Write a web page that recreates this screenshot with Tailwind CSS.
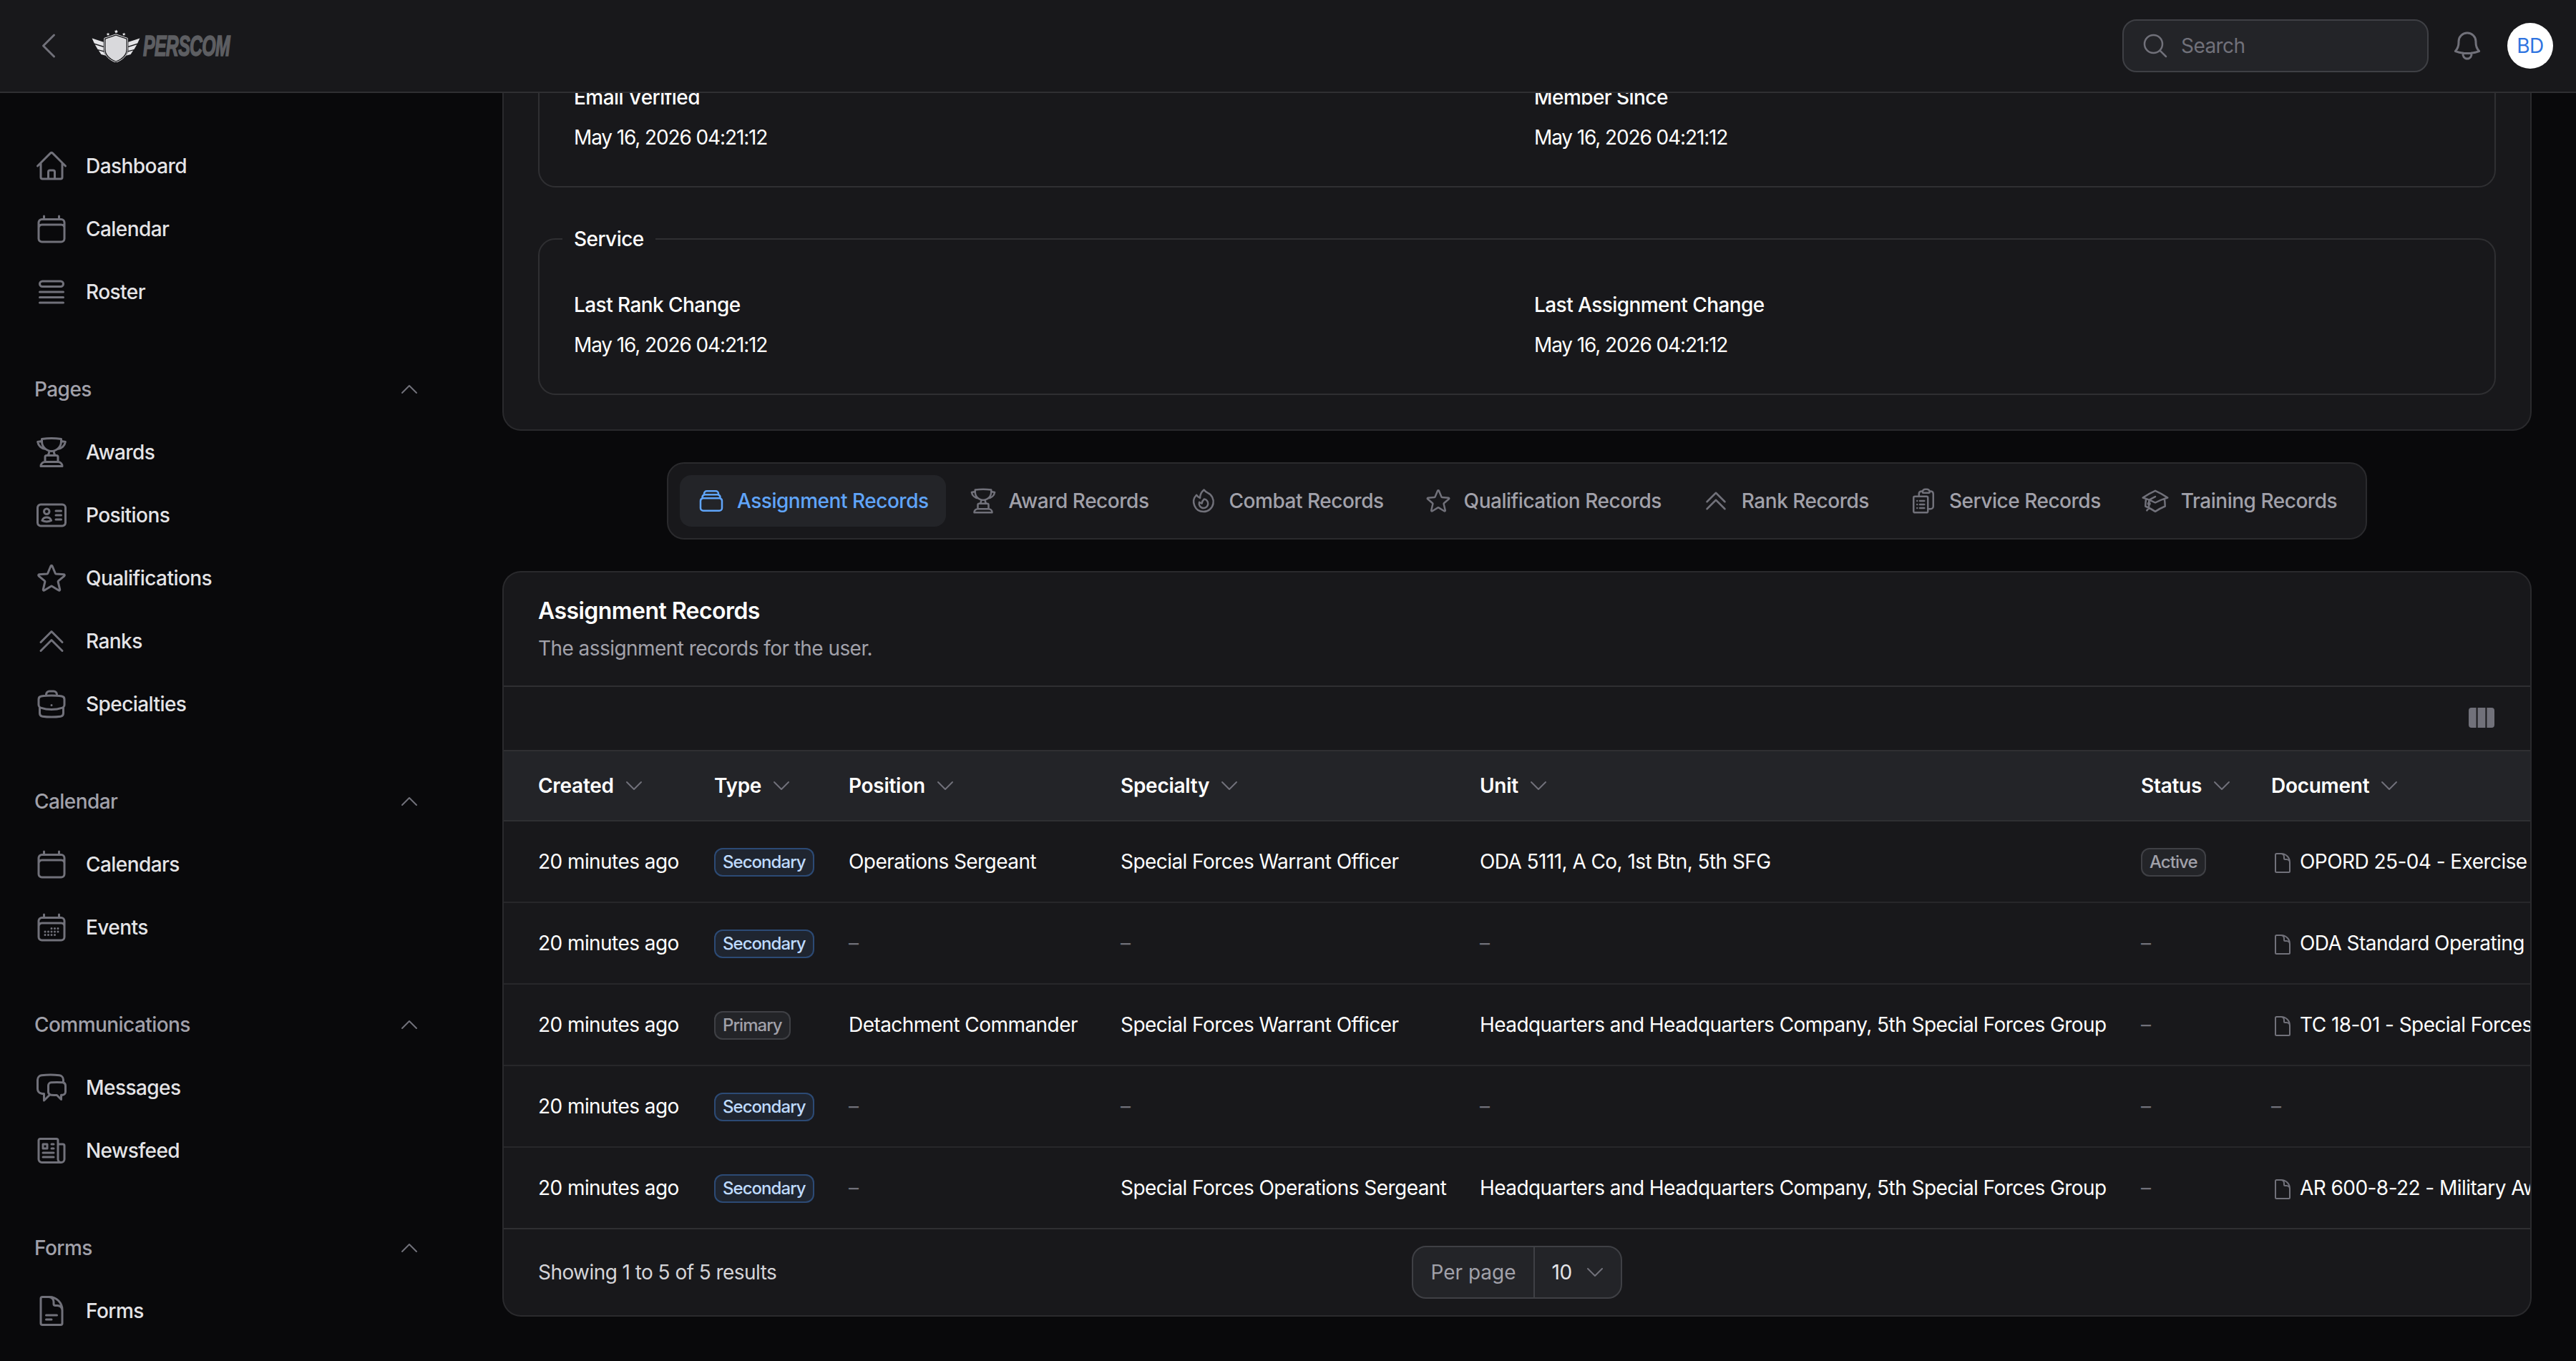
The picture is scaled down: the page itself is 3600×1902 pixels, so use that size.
<!DOCTYPE html>
<html lang="en">
<head>
  <meta charset="UTF-8" />
  <meta name="viewport" content="width=device-width, initial-scale=1" />
  <title>Perscom - Assignment Records</title>
  <script src="https://cdn.jsdelivr.net/npm/@tailwindcss/browser@4"></script>
</head>
<body class="bg-[#09090b] overflow-hidden">

<!-- icon sprite -->
<svg class="hidden" xmlns="http://www.w3.org/2000/svg">
  <symbol id="i-calendar" viewBox="0 0 24 24"><path d="M6.75 3v2.25M17.25 3v2.25M3 18.75V7.5a2.25 2.25 0 0 1 2.25-2.25h13.5A2.25 2.25 0 0 1 21 7.5v11.25m-18 0A2.25 2.25 0 0 0 5.25 21h13.5A2.25 2.25 0 0 0 21 18.75m-18 0v-7.5A2.25 2.25 0 0 1 5.25 9h13.5A2.25 2.25 0 0 1 21 11.25v7.5"/></symbol>
  <symbol id="i-trophy" viewBox="0 0 24 24"><path d="M16.5 18.75h-9m9 0a3 3 0 0 1 3 3h-15a3 3 0 0 1 3-3m9 0v-3.375c0-.621-.503-1.125-1.125-1.125h-.871M7.5 18.75v-3.375c0-.621.504-1.125 1.125-1.125h.872m5.007 0H9.497m5.007 0a7.454 7.454 0 0 1-.982-3.172M9.497 14.25a7.454 7.454 0 0 0 .981-3.172M5.25 4.236c-.982.143-1.954.317-2.916.52A6.003 6.003 0 0 0 7.73 9.728M5.25 4.236V4.5c0 2.108.966 3.99 2.48 5.228M5.25 4.236V2.721C7.456 2.41 9.71 2.25 12 2.25c2.291 0 4.545.16 6.75.47v1.516M7.73 9.728a6.726 6.726 0 0 0 2.748 1.35m8.272-6.842V4.5c0 2.108-.966 3.99-2.48 5.228m2.48-5.492a46.32 46.32 0 0 1 2.916.52 6.003 6.003 0 0 1-5.395 4.972m0 0a6.726 6.726 0 0 1-2.749 1.35m0 0a6.772 6.772 0 0 1-3.044 0"/></symbol>
  <symbol id="i-star" viewBox="0 0 24 24"><path d="M11.48 3.499a.562.562 0 0 1 1.04 0l2.125 5.111a.563.563 0 0 0 .475.345l5.518.442c.499.04.701.663.321.988l-4.204 3.602a.563.563 0 0 0-.182.557l1.285 5.385a.562.562 0 0 1-.84.61l-4.725-2.885a.562.562 0 0 0-.586 0L6.982 20.54a.562.562 0 0 1-.84-.61l1.285-5.386a.562.562 0 0 0-.182-.557l-4.204-3.602a.562.562 0 0 1 .321-.988l5.518-.442a.563.563 0 0 0 .475-.345L11.48 3.5Z"/></symbol>
  <symbol id="i-ranks" viewBox="0 0 24 24"><path d="m4.5 18.75 7.5-7.5 7.5 7.5"/><path d="m4.5 12.75 7.5-7.5 7.5 7.5"/></symbol>
  <symbol id="i-up" viewBox="0 0 24 24"><path d="m4.5 15.75 7.5-7.5 7.5 7.5"/></symbol>
  <symbol id="i-down" viewBox="0 0 24 24"><path d="m19.5 8.25-7.5 7.5-7.5-7.5"/></symbol>
  <symbol id="i-doc" viewBox="0 0 24 24"><path d="M19.5 14.25v-2.625a3.375 3.375 0 0 0-3.375-3.375h-1.5A1.125 1.125 0 0 1 13.5 7.125v-1.5a3.375 3.375 0 0 0-3.375-3.375H8.25m2.25 0H5.625c-.621 0-1.125.504-1.125 1.125v17.25c0 .621.504 1.125 1.125 1.125h12.75c.621 0 1.125-.504 1.125-1.125V11.25a9 9 0 0 0-9-9Z"/></symbol>
</svg>

<div class="[zoom:2] w-[1800px] h-[951px] flex flex-col overflow-hidden bg-[#09090b] text-white text-sm tracking-[-0.02em] [font-family:Inter,sans-serif]">

  <!-- TOP BAR -->
  <header class="h-[65px] shrink-0 flex items-center justify-between pl-[22px] pr-4 bg-[#18181b] border-b border-[#2f2f32]">
    <div class="flex items-center gap-[18px]">
      <svg class="w-6 h-6 text-[#71717a]" fill="none" stroke="currentColor" stroke-width="1.5" stroke-linecap="round" stroke-linejoin="round" viewBox="0 0 24 24"><path d="M15.75 19.5 8.25 12l7.5-7.5"/></svg>
      <div class="flex items-center gap-[2px] w-[98px]">
        <svg class="w-[34px] h-[23px] shrink-0" viewBox="0 0 34 23" fill="#e4e4e7">
          <path d="M11.5 2.2l.35.75.8.1-.6.55.15.8-.7-.4-.7.4.15-.8-.6-.55.8-.1z"/>
          <path d="M17.2.2l.4.85.9.1-.65.62.17.9-.82-.45-.82.45.17-.9-.65-.62.9-.1z"/>
          <path d="M22.6 2.2l.35.75.8.1-.6.55.15.8-.7-.4-.7.4.15-.8-.6-.55.8-.1z"/>
          <path d="M17 4.6l7 2.4v7c0 4-3.4 6.6-7 8-3.6-1.4-7-4-7-8V7z" fill="#d9d9dc" stroke="#f4f4f5" stroke-width=".4"/>
          <path d="M17 3.4l8.1 2.8v7.9c0 4.6-4 7.5-8.1 9-4.100-1.500-8.100-4.400-8.100-9V6.200z" fill="none" stroke="#e4e4e7" stroke-width=".5"/>
          <path d="M.3 6.200l8 2.700v2.900L1.900 9.700zM2.300 10.600l6 1.900v2.500l-4-1zM4.900 14.800l3.600.9c.3 1 .8 1.900 1.500 2.700l-3.300-.9z"/>
          <path d="M33.700 6.200l-8 2.700v2.900l6.400-2.100zM31.700 10.600l-6 1.900v2.500l4-1zM29.100 14.800l-3.600.9c-.3 1-.8 1.900-1.500 2.700l3.300-.9z"/>
        </svg>
        <span class="text-[#5d5e62] italic font-bold text-[20px] leading-none whitespace-nowrap origin-left scale-x-[0.62] [font-family:'Liberation_Sans',sans-serif] tracking-tight [-webkit-text-stroke:0.8px_#5d5e62]">PERSCOM</span>
      </div>
    </div>
    <div class="flex items-center">
      <div class="w-[214px] h-[37px] flex items-center gap-2 px-3 rounded-[10px] bg-[#232428] border border-[#3f4045]">
        <svg class="w-5 h-5 text-[#71717a]" fill="none" stroke="currentColor" stroke-width="1.5" stroke-linecap="round" stroke-linejoin="round" viewBox="0 0 24 24"><path d="m21 21-5.197-5.197m0 0A7.5 7.5 0 1 0 5.196 5.196a7.5 7.5 0 0 0 10.607 10.607Z"/></svg>
        <span class="text-[#71717a]">Search</span>
      </div>
      <svg class="w-6 h-6 ml-[15px] text-[#71717a]" fill="none" stroke="currentColor" stroke-width="1.5" stroke-linecap="round" stroke-linejoin="round" viewBox="0 0 24 24"><path d="M14.857 17.082a23.848 23.848 0 0 0 5.454-1.31A8.967 8.967 0 0 1 18 9.75V9A6 6 0 0 0 6 9v.75a8.967 8.967 0 0 1-2.312 6.022c1.733.64 3.56 1.085 5.455 1.31m5.714 0a24.255 24.255 0 0 1-5.714 0m5.714 0a3 3 0 1 1-5.714 0"/></svg>
      <div class="w-8 h-8 ml-4 rounded-full bg-white flex items-center justify-center text-sm text-[#2f74e0]">BD</div>
    </div>
  </header>

  <div class="flex flex-1 min-h-0">

    <!-- SIDEBAR -->
    <aside class="w-80 shrink-0 px-6 pt-[33px] flex flex-col gap-8 font-medium text-[#e4e4e7] overflow-hidden">
      <div class="flex flex-col gap-2">
        <a class="h-9 flex items-center gap-3"><svg class="w-6 h-6 text-[#71717a]" fill="none" stroke="currentColor" stroke-width="1.5" stroke-linecap="round" stroke-linejoin="round" viewBox="0 0 24 24"><path d="m2.25 12 8.954-8.955c.44-.439 1.152-.439 1.591 0L21.75 12M4.5 9.75v10.125c0 .621.504 1.125 1.125 1.125H9.75v-4.875c0-.621.504-1.125 1.125-1.125h2.25c.621 0 1.125.504 1.125 1.125V21h4.125c.621 0 1.125-.504 1.125-1.125V9.75M8.25 21h8.25"/></svg>Dashboard</a>
        <a class="h-9 flex items-center gap-3"><svg class="w-6 h-6 text-[#71717a]" fill="none" stroke="currentColor" stroke-width="1.5" stroke-linecap="round" stroke-linejoin="round"><use href="#i-calendar"/></svg>Calendar</a>
        <a class="h-9 flex items-center gap-3"><svg class="w-6 h-6 text-[#71717a]" fill="none" stroke="currentColor" stroke-width="1.5" stroke-linecap="round" stroke-linejoin="round" viewBox="0 0 24 24"><path d="M3.75 12h16.5m-16.5 3.75h16.5m-16.5 3.75h16.5M5.625 4.5h12.75a1.875 1.875 0 0 1 0 3.75H5.625a1.875 1.875 0 0 1 0-3.75Z"/></svg>Roster</a>
      </div>

      <div class="flex flex-col gap-2">
        <div class="h-9 flex items-center justify-between text-[#a1a1aa]">Pages<svg class="w-4 h-4 mr-0.5 text-[#71717a]" fill="none" stroke="currentColor" stroke-width="1.5" stroke-linecap="round" stroke-linejoin="round"><use href="#i-up"/></svg></div>
        <a class="h-9 flex items-center gap-3"><svg class="w-6 h-6 text-[#71717a]" fill="none" stroke="currentColor" stroke-width="1.5" stroke-linecap="round" stroke-linejoin="round"><use href="#i-trophy"/></svg>Awards</a>
        <a class="h-9 flex items-center gap-3"><svg class="w-6 h-6 text-[#71717a]" fill="none" stroke="currentColor" stroke-width="1.5" stroke-linecap="round" stroke-linejoin="round" viewBox="0 0 24 24"><path d="M15 9h3.75M15 12h3.75M15 15h3.75M4.5 19.5h15a2.25 2.25 0 0 0 2.25-2.25V6.75A2.25 2.25 0 0 0 19.5 4.5h-15a2.25 2.25 0 0 0-2.25 2.25v10.5A2.25 2.25 0 0 0 4.5 19.5Zm6-10.125a1.875 1.875 0 1 1-3.75 0 1.875 1.875 0 0 1 3.75 0Zm1.294 6.336a6.721 6.721 0 0 1-3.17.789 6.721 6.721 0 0 1-3.168-.789 3.376 3.376 0 0 1 6.338 0Z"/></svg>Positions</a>
        <a class="h-9 flex items-center gap-3"><svg class="w-6 h-6 text-[#71717a]" fill="none" stroke="currentColor" stroke-width="1.5" stroke-linecap="round" stroke-linejoin="round"><use href="#i-star"/></svg>Qualifications</a>
        <a class="h-9 flex items-center gap-3"><svg class="w-6 h-6 text-[#71717a]" fill="none" stroke="currentColor" stroke-width="1.5" stroke-linecap="round" stroke-linejoin="round"><use href="#i-ranks"/></svg>Ranks</a>
        <a class="h-9 flex items-center gap-3"><svg class="w-6 h-6 text-[#71717a]" fill="none" stroke="currentColor" stroke-width="1.5" stroke-linecap="round" stroke-linejoin="round" viewBox="0 0 24 24"><path d="M20.25 14.15v4.25c0 1.094-.787 2.036-1.872 2.18-2.087.277-4.216.42-6.378.42s-4.291-.143-6.378-.42c-1.085-.144-1.872-1.086-1.872-2.18v-4.25m16.5 0a2.18 2.18 0 0 0 .75-1.661V8.706c0-1.081-.768-2.015-1.837-2.175a48.114 48.114 0 0 0-3.413-.387m4.5 8.006c-.194.165-.42.295-.673.38A23.978 23.978 0 0 1 12 15.75c-2.648 0-5.195-.429-7.577-1.22a2.016 2.016 0 0 1-.673-.38m0 0A2.18 2.18 0 0 1 3 12.489V8.706c0-1.081.768-2.015 1.837-2.175a48.111 48.111 0 0 1 3.413-.387m7.5 0V5.25A2.25 2.25 0 0 0 13.5 3h-3a2.25 2.25 0 0 0-2.25 2.25v.894m7.5 0a48.667 48.667 0 0 0-7.5 0M12 12.75h.008v.008H12v-.008Z"/></svg>Specialties</a>
      </div>

      <div class="flex flex-col gap-2">
        <div class="h-9 flex items-center justify-between text-[#a1a1aa]">Calendar<svg class="w-4 h-4 mr-0.5 text-[#71717a]" fill="none" stroke="currentColor" stroke-width="1.5" stroke-linecap="round" stroke-linejoin="round"><use href="#i-up"/></svg></div>
        <a class="h-9 flex items-center gap-3"><svg class="w-6 h-6 text-[#71717a]" fill="none" stroke="currentColor" stroke-width="1.5" stroke-linecap="round" stroke-linejoin="round"><use href="#i-calendar"/></svg>Calendars</a>
        <a class="h-9 flex items-center gap-3"><svg class="w-6 h-6 text-[#71717a]" fill="none" stroke="currentColor" stroke-width="1.5" stroke-linecap="round" stroke-linejoin="round" viewBox="0 0 24 24"><path d="M6.75 3v2.25M17.25 3v2.25M3 18.75V7.5a2.25 2.25 0 0 1 2.25-2.25h13.5A2.25 2.25 0 0 1 21 7.5v11.25m-18 0A2.25 2.25 0 0 0 5.25 21h13.5A2.25 2.25 0 0 0 21 18.75m-18 0v-7.5A2.25 2.25 0 0 1 5.25 9h13.5A2.25 2.25 0 0 1 21 11.25v7.5m-9-6h.008v.008H12v-.008ZM12 15h.008v.008H12V15Zm0 2.25h.008v.008H12v-.008ZM9.75 15h.008v.008H9.75V15Zm0 2.25h.008v.008H9.75v-.008ZM7.5 15h.008v.008H7.5V15Zm0 2.25h.008v.008H7.5v-.008Zm6.75-4.5h.008v.008h-.008v-.008Zm0 2.25h.008v.008h-.008V15Zm0 2.25h.008v.008h-.008v-.008Zm2.25-4.5h.008v.008H16.5v-.008Zm0 2.25h.008v.008H16.5V15Z"/></svg>Events</a>
      </div>

      <div class="flex flex-col gap-2">
        <div class="h-9 flex items-center justify-between text-[#a1a1aa]">Communications<svg class="w-4 h-4 mr-0.5 text-[#71717a]" fill="none" stroke="currentColor" stroke-width="1.5" stroke-linecap="round" stroke-linejoin="round"><use href="#i-up"/></svg></div>
        <a class="h-9 flex items-center gap-3"><svg class="w-6 h-6 text-[#71717a]" fill="none" stroke="currentColor" stroke-width="1.5" stroke-linecap="round" stroke-linejoin="round" viewBox="0 0 24 24"><path d="M20.25 8.511c.884.284 1.5 1.128 1.5 2.097v4.286c0 1.136-.847 2.1-1.98 2.193-.34.027-.68.052-1.02.072v3.091l-3-3c-1.354 0-2.694-.055-4.02-.163a2.115 2.115 0 0 1-.825-.242m9.345-8.334a2.126 2.126 0 0 0-.476-.095 48.64 48.64 0 0 0-8.048 0c-1.131.094-1.976 1.057-1.976 2.192v4.286c0 .837.46 1.58 1.155 1.951m9.345-8.334V6.637c0-1.621-1.152-3.026-2.76-3.235A48.455 48.455 0 0 0 11.25 3c-2.115 0-4.198.137-6.24.402-1.608.209-2.76 1.614-2.76 3.235v6.226c0 1.621 1.152 3.026 2.76 3.235.577.075 1.157.14 1.74.194V21l4.155-4.155"/></svg>Messages</a>
        <a class="h-9 flex items-center gap-3"><svg class="w-6 h-6 text-[#71717a]" fill="none" stroke="currentColor" stroke-width="1.5" stroke-linecap="round" stroke-linejoin="round" viewBox="0 0 24 24"><path d="M12 7.5h1.5m-1.5 3h1.5m-7.5 3h7.5m-7.5 3h7.5m3-9h3.375c.621 0 1.125.504 1.125 1.125V18a2.25 2.25 0 0 1-2.25 2.25M16.5 7.5V18a2.25 2.25 0 0 0 2.25 2.25M16.5 7.5V4.875c0-.621-.504-1.125-1.125-1.125H4.125C3.504 3.75 3 4.254 3 4.875V18a2.25 2.25 0 0 0 2.25 2.25h13.5M6 7.5h3v3H6v-3Z"/></svg>Newsfeed</a>
      </div>

      <div class="flex flex-col gap-2">
        <div class="h-9 flex items-center justify-between text-[#a1a1aa]">Forms<svg class="w-4 h-4 mr-0.5 text-[#71717a]" fill="none" stroke="currentColor" stroke-width="1.5" stroke-linecap="round" stroke-linejoin="round"><use href="#i-up"/></svg></div>
        <a class="h-9 flex items-center gap-3"><svg class="w-6 h-6 text-[#71717a]" fill="none" stroke="currentColor" stroke-width="1.5" stroke-linecap="round" stroke-linejoin="round" viewBox="0 0 24 24"><path d="M19.5 14.25v-2.625a3.375 3.375 0 0 0-3.375-3.375h-1.5A1.125 1.125 0 0 1 13.5 7.125v-1.5a3.375 3.375 0 0 0-3.375-3.375H8.25m0 12.75h7.5m-7.5 3H12M10.5 2.25H5.625c-.621 0-1.125.504-1.125 1.125v17.25c0 .621.504 1.125 1.125 1.125h12.75c.621 0 1.125-.504 1.125-1.125V11.25a9 9 0 0 0-9-9Z"/></svg>Forms</a>
      </div>
    </aside>

    <!-- MAIN (scrolled, first card runs under the top bar) -->
    <main class="flex-1 min-w-0 px-8 overflow-hidden">
      <section class="-mt-[77px] bg-[#18181b] rounded-xl ring-1 ring-[#2a2a2d] p-6">
        <fieldset class="border border-[#2f2f32] rounded-xl px-6 pb-6 pt-[26px]">
          <legend class="h-5 -ml-2 px-2"></legend>
          <div class="grid grid-cols-2 gap-6">
            <div class="flex flex-col gap-2"><div class="font-medium">Email Verified</div><div class="tracking-[-0.04em]">May 16, 2026 04:21:12</div></div>
            <div class="flex flex-col gap-2"><div class="font-medium">Member Since</div><div class="tracking-[-0.04em]">May 16, 2026 04:21:12</div></div>
          </div>
        </fieldset>
        <fieldset class="mt-[26px] border border-[#2f2f32] rounded-xl px-6 pb-6 pt-[26px]">
          <legend class="-ml-2 px-2 font-medium">Service</legend>
          <div class="grid grid-cols-2 gap-6">
            <div class="flex flex-col gap-2"><div class="font-medium">Last Rank Change</div><div class="tracking-[-0.04em]">May 16, 2026 04:21:12</div></div>
            <div class="flex flex-col gap-2"><div class="font-medium">Last Assignment Change</div><div class="tracking-[-0.04em]">May 16, 2026 04:21:12</div></div>
          </div>
        </fieldset>
      </section>

      <!-- TABS -->
      <nav class="mt-[23px] mx-auto w-fit flex gap-1 p-2 bg-[#18181b] border border-[#2a2a2d] rounded-xl font-medium text-[#a1a1aa] whitespace-nowrap tracking-[-0.017em]">
        <a class="h-9 flex items-center gap-2 px-3 rounded-lg bg-[#232428] text-[#60a5fa]"><svg class="w-5 h-5" fill="none" stroke="currentColor" stroke-width="1.5" stroke-linecap="round" stroke-linejoin="round" viewBox="0 0 24 24"><path d="M6 6.878V6a2.25 2.25 0 0 1 2.25-2.25h7.5A2.25 2.25 0 0 1 18 6v.878m-12 0c.235-.083.487-.128.75-.128h10.5c.263 0 .515.045.75.128m-12 0A2.25 2.25 0 0 0 4.5 9v.878m13.5-3A2.25 2.25 0 0 1 19.5 9v.878m0 0a2.246 2.246 0 0 0-.75-.128H5.25c-.263 0-.515.045-.75.128m15 0A2.25 2.25 0 0 1 21 12v6a2.25 2.25 0 0 1-2.25 2.25H5.25A2.25 2.25 0 0 1 3 18v-6c0-.98.626-1.813 1.5-2.122"/></svg>Assignment Records</a>
        <a class="h-9 flex items-center gap-2 px-3"><svg class="w-5 h-5 text-[#71717a]" fill="none" stroke="currentColor" stroke-width="1.5" stroke-linecap="round" stroke-linejoin="round"><use href="#i-trophy"/></svg>Award Records</a>
        <a class="h-9 flex items-center gap-2 px-3"><svg class="w-5 h-5 text-[#71717a]" fill="none" stroke="currentColor" stroke-width="1.5" stroke-linecap="round" stroke-linejoin="round" viewBox="0 0 24 24"><path d="M15.362 5.214A8.252 8.252 0 0 1 12 21 8.25 8.25 0 0 1 6.038 7.047 8.287 8.287 0 0 0 9 9.601a8.983 8.983 0 0 1 3.361-6.867 8.21 8.21 0 0 0 3 2.48Z"/><path d="M12 18a3.75 3.75 0 0 0 .495-7.468 5.99 5.99 0 0 0-1.925 3.547 5.975 5.975 0 0 1-2.133-1.001A3.75 3.75 0 0 0 12 18Z"/></svg>Combat Records</a>
        <a class="h-9 flex items-center gap-2 px-3"><svg class="w-5 h-5 text-[#71717a]" fill="none" stroke="currentColor" stroke-width="1.5" stroke-linecap="round" stroke-linejoin="round"><use href="#i-star"/></svg>Qualification Records</a>
        <a class="h-9 flex items-center gap-2 px-3"><svg class="w-5 h-5 text-[#71717a]" fill="none" stroke="currentColor" stroke-width="1.5" stroke-linecap="round" stroke-linejoin="round"><use href="#i-ranks"/></svg>Rank Records</a>
        <a class="h-9 flex items-center gap-2 px-3"><svg class="w-5 h-5 text-[#71717a]" fill="none" stroke="currentColor" stroke-width="1.5" stroke-linecap="round" stroke-linejoin="round" viewBox="0 0 24 24"><path d="M9 12h3.75M9 15h3.75M9 18h3.75m3 .75H18a2.25 2.25 0 0 0 2.25-2.25V6.108c0-1.135-.845-2.098-1.976-2.192a48.424 48.424 0 0 0-1.123-.08m-5.801 0c-.065.21-.1.433-.1.664 0 .414.336.75.75.75h4.5a.75.75 0 0 0 .75-.75 2.25 2.25 0 0 0-.1-.664m-5.8 0A2.251 2.251 0 0 1 13.5 2.25H15c1.012 0 1.867.668 2.15 1.586m-5.8 0c-.376.023-.75.05-1.124.08C9.095 4.01 8.25 4.973 8.25 6.108V8.25m0 0H4.875c-.621 0-1.125.504-1.125 1.125v11.25c0 .621.504 1.125 1.125 1.125h9.75c.621 0 1.125-.504 1.125-1.125V9.375c0-.621-.504-1.125-1.125-1.125H8.25ZM6.75 12h.008v.008H6.75V12Zm0 3h.008v.008H6.75V15Zm0 3h.008v.008H6.75V18Z"/></svg>Service Records</a>
        <a class="h-9 flex items-center gap-2 px-3"><svg class="w-5 h-5 text-[#71717a]" fill="none" stroke="currentColor" stroke-width="1.5" stroke-linecap="round" stroke-linejoin="round" viewBox="0 0 24 24"><path d="M4.26 10.147a60.438 60.438 0 0 0-.491 6.347A48.62 48.62 0 0 1 12 20.904a48.62 48.62 0 0 1 8.232-4.41 60.46 60.46 0 0 0-.491-6.347m-15.482 0a50.636 50.636 0 0 0-2.658-.813A59.906 59.906 0 0 1 12 3.493a59.903 59.903 0 0 1 10.399 5.84c-.896.248-1.783.52-2.658.814m-15.482 0A50.717 50.717 0 0 1 12 13.489a50.702 50.702 0 0 1 7.74-3.342M6.75 15a.75.75 0 1 0 0-1.5.75.75 0 0 0 0 1.5Zm0 0v-3.675A55.378 55.378 0 0 1 12 8.443m-7.007 11.55A5.981 5.981 0 0 0 6.75 15.75v-1.5"/></svg>Training Records</a>
      </nav>

      <!-- RECORDS TABLE CARD -->
      <section class="mt-[23px] bg-[#18181b] rounded-xl ring-1 ring-[#2a2a2d] overflow-hidden">
        <div class="h-[79px] px-6 pt-[15px]">
          <h2 class="text-base font-semibold">Assignment Records</h2>
          <p class="mt-1 text-[#a1a1aa]">The assignment records for the user.</p>
        </div>
        <div class="h-[45px] border-t border-[#2f2f32] flex items-center justify-end pr-6">
          <svg class="w-[18px] h-[14px] -mt-px mr-px text-[#71717a]" viewBox="0 0 18 14" fill="currentColor"><path d="M5.300 0v14H2a2 2 0 0 1-2-2V2a2 2 0 0 1 2-2zM6.300 0h5.400v14H6.300zM12.700 0H16a2 2 0 0 1 2 2v10a2 2 0 0 1-2 2h-3.300z"/></svg>
        </div>
        <div class="overflow-hidden">
          <table class="table-fixed w-[1523px] border-collapse whitespace-nowrap text-left">
            <thead>
              <tr class="h-[49px] bg-[#232428] border-y border-[#2f2f32] tracking-[-0.01em]">
                <th class="w-[135px] pl-6 font-semibold"><span class="flex items-center gap-1.5">Created<svg class="w-4 h-4 text-[#71717a]" fill="none" stroke="currentColor" stroke-width="1.5" stroke-linecap="round" stroke-linejoin="round"><use href="#i-down"/></svg></span></th>
                <th class="w-[94px] px-3 font-semibold"><span class="flex items-center gap-1.5">Type<svg class="w-4 h-4 text-[#71717a]" fill="none" stroke="currentColor" stroke-width="1.5" stroke-linecap="round" stroke-linejoin="round"><use href="#i-down"/></svg></span></th>
                <th class="w-[190px] px-3 font-semibold"><span class="flex items-center gap-1.5">Position<svg class="w-4 h-4 text-[#71717a]" fill="none" stroke="currentColor" stroke-width="1.5" stroke-linecap="round" stroke-linejoin="round"><use href="#i-down"/></svg></span></th>
                <th class="w-[251px] px-3 font-semibold"><span class="flex items-center gap-1.5">Specialty<svg class="w-4 h-4 text-[#71717a]" fill="none" stroke="currentColor" stroke-width="1.5" stroke-linecap="round" stroke-linejoin="round"><use href="#i-down"/></svg></span></th>
                <th class="w-[462px] px-3 font-semibold"><span class="flex items-center gap-1.5">Unit<svg class="w-4 h-4 text-[#71717a]" fill="none" stroke="currentColor" stroke-width="1.5" stroke-linecap="round" stroke-linejoin="round"><use href="#i-down"/></svg></span></th>
                <th class="w-[91px] px-3 font-semibold"><span class="flex items-center gap-1.5">Status<svg class="w-4 h-4 text-[#71717a]" fill="none" stroke="currentColor" stroke-width="1.5" stroke-linecap="round" stroke-linejoin="round"><use href="#i-down"/></svg></span></th>
                <th class="w-[300px] px-3 font-semibold"><span class="flex items-center gap-1.5">Document<svg class="w-4 h-4 text-[#71717a]" fill="none" stroke="currentColor" stroke-width="1.5" stroke-linecap="round" stroke-linejoin="round"><use href="#i-down"/></svg></span></th>
              </tr>
            </thead>
            <tbody>
              <tr class="h-[57px] border-b border-[#27272a]">
                <td class="pl-6">20 minutes ago</td>
                <td class="px-3"><span class="inline-flex px-1.5 py-0.5 rounded-md text-xs font-medium tracking-[-0.04em] text-[#bfdbfe] bg-[#1f2530] ring-1 ring-inset ring-[#2c4a75] align-middle">Secondary</span></td>
                <td class="px-3">Operations Sergeant</td>
                <td class="px-3">Special Forces Warrant Officer</td>
                <td class="px-3">ODA 5111, A Co, 1st Btn, 5th SFG</td>
                <td class="px-3"><span class="inline-flex px-1.5 py-0.5 rounded-md text-xs font-medium tracking-[-0.04em] text-[#a1a1aa] bg-[#232428] ring-1 ring-inset ring-[#3f4045] align-middle">Active</span></td>
                <td class="px-3"><span class="flex items-center gap-1"><svg class="w-4 h-4 mt-0.5 shrink-0 text-[#71717a]" fill="none" stroke="currentColor" stroke-width="1.5" stroke-linecap="round" stroke-linejoin="round"><use href="#i-doc"/></svg>OPORD 25-04 - Exercise</span></td>
              </tr>
              <tr class="h-[57px] border-b border-[#27272a] text-[#71717a]">
                <td class="pl-6 text-white">20 minutes ago</td>
                <td class="px-3"><span class="inline-flex px-1.5 py-0.5 rounded-md text-xs font-medium tracking-[-0.04em] text-[#bfdbfe] bg-[#1f2530] ring-1 ring-inset ring-[#2c4a75] align-middle">Secondary</span></td>
                <td class="px-3">–</td>
                <td class="px-3">–</td>
                <td class="px-3">–</td>
                <td class="px-3">–</td>
                <td class="px-3 text-white"><span class="flex items-center gap-1"><svg class="w-4 h-4 mt-0.5 shrink-0 text-[#71717a]" fill="none" stroke="currentColor" stroke-width="1.5" stroke-linecap="round" stroke-linejoin="round"><use href="#i-doc"/></svg>ODA Standard Operating</span></td>
              </tr>
              <tr class="h-[57px] border-b border-[#27272a]">
                <td class="pl-6">20 minutes ago</td>
                <td class="px-3"><span class="inline-flex px-1.5 py-0.5 rounded-md text-xs font-medium tracking-[-0.04em] text-[#a1a1aa] bg-[#232428] ring-1 ring-inset ring-[#3f4045] align-middle">Primary</span></td>
                <td class="px-3">Detachment Commander</td>
                <td class="px-3">Special Forces Warrant Officer</td>
                <td class="px-3">Headquarters and Headquarters Company, 5th Special Forces Group</td>
                <td class="px-3 text-[#71717a]">–</td>
                <td class="px-3"><span class="flex items-center gap-1"><svg class="w-4 h-4 mt-0.5 shrink-0 text-[#71717a]" fill="none" stroke="currentColor" stroke-width="1.5" stroke-linecap="round" stroke-linejoin="round"><use href="#i-doc"/></svg>TC 18-01 - Special Forces</span></td>
              </tr>
              <tr class="h-[57px] border-b border-[#27272a] text-[#71717a]">
                <td class="pl-6 text-white">20 minutes ago</td>
                <td class="px-3"><span class="inline-flex px-1.5 py-0.5 rounded-md text-xs font-medium tracking-[-0.04em] text-[#bfdbfe] bg-[#1f2530] ring-1 ring-inset ring-[#2c4a75] align-middle">Secondary</span></td>
                <td class="px-3">–</td>
                <td class="px-3">–</td>
                <td class="px-3">–</td>
                <td class="px-3">–</td>
                <td class="px-3">–</td>
              </tr>
              <tr class="h-[57px] border-b border-[#2f2f32]">
                <td class="pl-6">20 minutes ago</td>
                <td class="px-3"><span class="inline-flex px-1.5 py-0.5 rounded-md text-xs font-medium tracking-[-0.04em] text-[#bfdbfe] bg-[#1f2530] ring-1 ring-inset ring-[#2c4a75] align-middle">Secondary</span></td>
                <td class="px-3 text-[#71717a]">–</td>
                <td class="px-3">Special Forces Operations Sergeant</td>
                <td class="px-3">Headquarters and Headquarters Company, 5th Special Forces Group</td>
                <td class="px-3 text-[#71717a]">–</td>
                <td class="px-3"><span class="flex items-center gap-1"><svg class="w-4 h-4 mt-0.5 shrink-0 text-[#71717a]" fill="none" stroke="currentColor" stroke-width="1.5" stroke-linecap="round" stroke-linejoin="round"><use href="#i-doc"/></svg>AR 600-8-22 - Military Awards</span></td>
              </tr>
            </tbody>
          </table>
        </div>
        <div class="h-[60px] grid grid-cols-3 items-center px-6">
          <div class="text-[#d4d4d8]">Showing 1 to 5 of 5 results</div>
          <div class="justify-self-center flex h-[37px] rounded-[10px] bg-[#232428] border border-[#3f4045]">
            <span class="flex items-center px-3 text-[#a1a1aa] border-r border-[#3f4045] tracking-normal">Per page</span>
            <span class="flex items-center gap-2 pl-3 pr-2.5 text-[#e4e4e7]">10<svg class="w-4 h-4 text-[#71717a]" fill="none" stroke="currentColor" stroke-width="1.5" stroke-linecap="round" stroke-linejoin="round"><use href="#i-down"/></svg></span>
          </div>
        </div>
      </section>
    </main>
  </div>
</div>
</body>
</html>
